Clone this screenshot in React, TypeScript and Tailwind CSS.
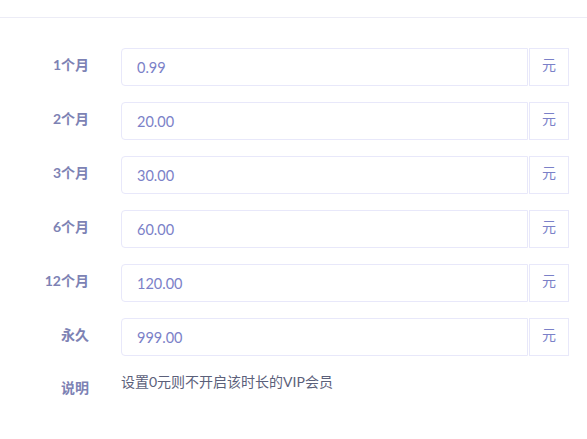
import React from 'react';

const rows = [
  { label: '1个月', value: '0.99' },
  { label: '2个月', value: '20.00' },
  { label: '3个月', value: '30.00' },
  { label: '6个月', value: '60.00' },
  { label: '12个月', value: '120.00' },
  { label: '永久', value: '999.00' },
];

export default function App() {
  return (
    <div
      className="w-[587px] h-[439px] bg-white overflow-hidden"
      style={{ fontFamily: 'Lato, "Noto Sans CJK SC", sans-serif' }}
    >
      <div className="h-[18px] border-b border-[#ececf6]" />
      <div className="pt-[30px] flex flex-col gap-[16px]">
        {rows.map((r) => (
          <div key={r.label} className="flex items-center">
            <label className="w-[89px] text-right text-[14px] leading-[20px] font-bold text-[#7d82b4] pb-[4px]">
              {r.label}
            </label>
            <div className="ml-[32px] flex h-[38px]">
              <input
                readOnly
                value={r.value}
                className="w-[407px] h-full border border-[#e8e8fa] rounded-l-[4px] px-[15px] text-[14.5px] text-[#7b81c8] outline-none bg-white"
              />
              <span className="ml-px w-[40px] h-full border border-[#e8e8fa] flex items-center justify-center text-[14px] leading-[20px] text-[#7b81c8] pb-[4px]">
                元
              </span>
            </div>
          </div>
        ))}
        <div className="flex items-start">
          <label className="w-[89px] text-right text-[14px] leading-[20px] font-bold text-[#7d82b4] pt-[6px]">
            说明
          </label>
          <p className="ml-[32px] text-[14px] leading-[20px] text-[#5b607a]">
            设置0元则不开启该时长的VIP会员
          </p>
        </div>
      </div>
    </div>
  );
}
